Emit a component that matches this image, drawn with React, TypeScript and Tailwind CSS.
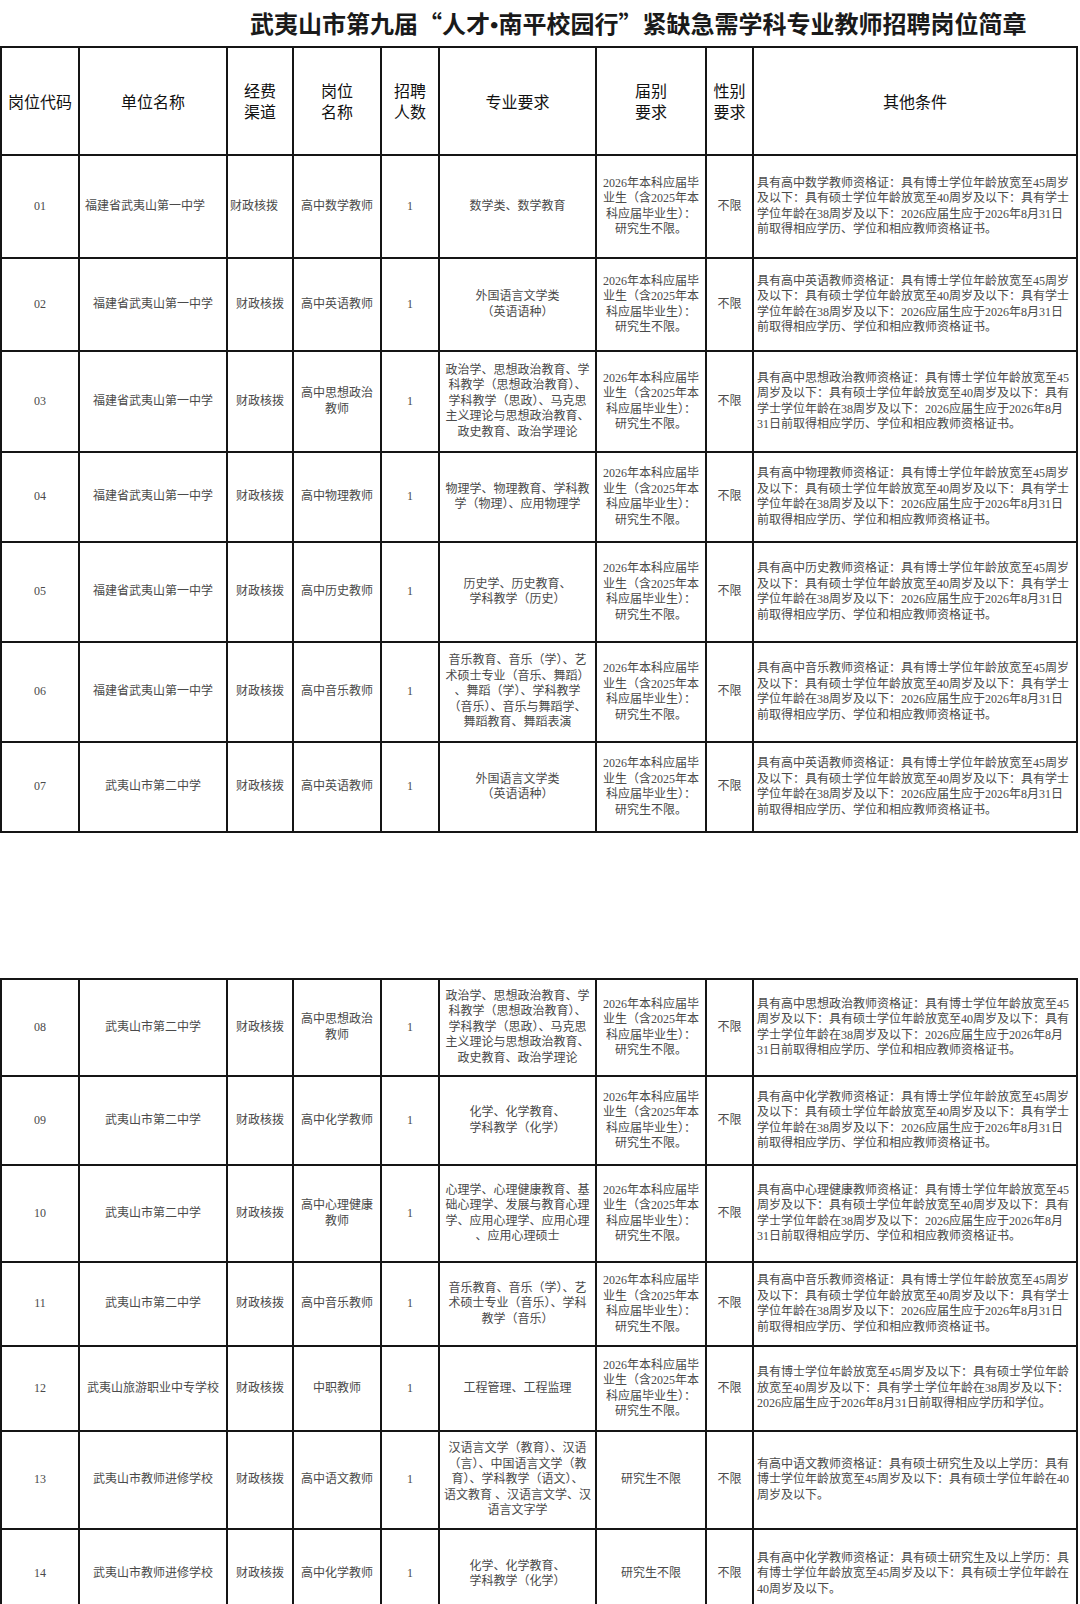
import React from "react";

type Row = {
  code: string;
  unit: string;
  left?: boolean;
  post: string[];
  major: string[];
  grad?: string[];
  cond: string[];
  h: string;
};

const GRAD = ["2026年本科应届毕", "业生（含2025年本", "科应届毕业生）：", "研究生不限。"];

const std = (s: string) => [
  `具有高中${s}教师资格证：具有博士学位年龄放宽至45周岁`,
  "及以下：具有硕士学位年龄放宽至40周岁及以下：具有学士",
  "学位年龄在38周岁及以下：2026应届生应于2026年8月31日",
  "前取得相应学历、学位和相应教师资格证书。",
];

const long = (s: string) => [
  `具有高中${s}教师资格证：具有博士学位年龄放宽至45`,
  "周岁及以下：具有硕士学位年龄放宽至40周岁及以下：具有",
  "学士学位年龄在38周岁及以下：2026应届生应于2026年8月",
  "31日前取得相应学历、学位和相应教师资格证书。",
];

const ZZ = [
  "政治学、思想政治教育、学",
  "科教学（思想政治教育）、",
  "学科教学（思政）、马克思",
  "主义理论与思想政治教育、",
  "政史教育、政治学理论",
];

const FIRST = "福建省武夷山第一中学";
const SECOND = "武夷山市第二中学";
const JX = "武夷山市教师进修学校";

const part1: Row[] = [
  { code: "01", unit: FIRST, left: true, post: ["高中数学教师"], major: ["数学类、数学教育"], cond: std("数学"), h: "h-[103px]" },
  { code: "02", unit: FIRST, post: ["高中英语教师"], major: ["外国语言文学类", "（英语语种）"], cond: std("英语"), h: "h-[93px]" },
  { code: "03", unit: FIRST, post: ["高中思想政治", "教师"], major: ZZ, cond: long("思想政治"), h: "h-[101px]" },
  { code: "04", unit: FIRST, post: ["高中物理教师"], major: ["物理学、物理教育、学科教", "学（物理）、应用物理学"], cond: std("物理"), h: "h-[90px]" },
  { code: "05", unit: FIRST, post: ["高中历史教师"], major: ["历史学、历史教育、", "学科教学（历史）"], cond: std("历史"), h: "h-[100px]" },
  {
    code: "06",
    unit: FIRST,
    post: ["高中音乐教师"],
    major: ["音乐教育、音乐（学）、艺", "术硕士专业（音乐、舞蹈）", "、舞蹈（学）、学科教学", "（音乐）、音乐与舞蹈学、", "舞蹈教育、舞蹈表演"],
    cond: std("音乐"),
    h: "h-[100px]",
  },
  { code: "07", unit: SECOND, post: ["高中英语教师"], major: ["外国语言文学类", "（英语语种）"], cond: std("英语"), h: "h-[90px]" },
];

const part2: Row[] = [
  { code: "08", unit: SECOND, post: ["高中思想政治", "教师"], major: ZZ, cond: long("思想政治"), h: "h-[97px]" },
  { code: "09", unit: SECOND, post: ["高中化学教师"], major: ["化学、化学教育、", "学科教学（化学）"], cond: std("化学"), h: "h-[89px]" },
  {
    code: "10",
    unit: SECOND,
    post: ["高中心理健康", "教师"],
    major: ["心理学、心理健康教育、基", "础心理学、发展与教育心理", "学、应用心理学、应用心理", "、应用心理硕士"],
    cond: long("心理健康"),
    h: "h-[97px]",
  },
  {
    code: "11",
    unit: SECOND,
    post: ["高中音乐教师"],
    major: ["音乐教育、音乐（学）、艺", "术硕士专业（音乐）、学科", "教学（音乐）"],
    cond: std("音乐"),
    h: "h-[84px]",
  },
  {
    code: "12",
    unit: "武夷山旅游职业中专学校",
    post: ["中职教师"],
    major: ["工程管理、工程监理"],
    cond: [
      "具有博士学位年龄放宽至45周岁及以下：具有硕士学位年龄",
      "放宽至40周岁及以下：具有学士学位年龄在38周岁及以下：",
      "2026应届生应于2026年8月31日前取得相应学历和学位。",
    ],
    h: "h-[85px]",
  },
  {
    code: "13",
    unit: JX,
    post: ["高中语文教师"],
    major: ["汉语言文学（教育）、汉语", "（言）、中国语言文学（教", "育）、学科教学（语文）、", "语文教育 、汉语言文学、汉", "语言文字学"],
    grad: ["研究生不限"],
    cond: [
      "有高中语文教师资格证：具有硕士研究生及以上学历：具有",
      "博士学位年龄放宽至45周岁及以下：具有硕士学位年龄在40",
      "周岁及以下。",
    ],
    h: "h-[98px]",
  },
  {
    code: "14",
    unit: JX,
    post: ["高中化学教师"],
    major: ["化学、化学教育、", "学科教学（化学）"],
    grad: ["研究生不限"],
    cond: [
      "具有高中化学教师资格证：具有硕士研究生及以上学历：具",
      "有博士学位年龄放宽至45周岁及以下：具有硕士学位年龄在",
      "40周岁及以下。",
    ],
    h: "h-[90px]",
  },
];

const td = "border-2 border-[#151515] align-middle";

function Lines({ lines }: { lines: string[] }) {
  return (
    <>
      {lines.map((l, i) => (
        <div key={i} className="whitespace-nowrap">
          {l}
        </div>
      ))}
    </>
  );
}

function Cols() {
  return (
    <colgroup>
      <col className="w-[78px]" />
      <col className="w-[148px]" />
      <col className="w-[66px]" />
      <col className="w-[88px]" />
      <col className="w-[58px]" />
      <col className="w-[157px]" />
      <col className="w-[110px]" />
      <col className="w-[47px]" />
      <col className="w-[324px]" />
    </colgroup>
  );
}

function Body({ rows }: { rows: Row[] }) {
  return (
    <tbody className="text-[12px] leading-[15.5px] text-[#4a4a4a] [font-family:'Liberation_Serif','Noto_Sans_CJK_SC',serif]">
      {rows.map((r) => (
        <tr key={r.code} className={r.h}>
          <td className={`${td} text-center`}>{r.code}</td>
          <td className={`${td} ${r.left ? "pl-[5px] text-left" : "text-center"}`}>{r.unit}</td>
          <td className={`${td} ${r.left ? "pl-[2px] text-left" : "text-center"}`}>财政核拨</td>
          <td className={`${td} text-center`}>
            <Lines lines={r.post} />
          </td>
          <td className={`${td} text-center`}>1</td>
          <td className={`${td} text-center`}>
            <Lines lines={r.major} />
          </td>
          <td className={`${td} text-center`}>
            <Lines lines={r.grad ?? GRAD} />
          </td>
          <td className={`${td} text-center`}>不限</td>
          <td className={`${td} pl-[3px] text-left`}>
            <Lines lines={r.cond} />
          </td>
        </tr>
      ))}
    </tbody>
  );
}

export default function App() {
  return (
    <div className="h-[1604px] w-[1080px] overflow-hidden bg-white">
      <h1 className="h-[46px] pl-[250px] pt-[9px] text-[24px] font-bold leading-[28px] whitespace-nowrap text-[#1a1a1a] [font-family:'Noto_Sans_CJK_SC',serif]">
        武夷山市第九届“人才
        <span className="[font-family:'Liberation_Serif',serif]">•</span>
        南平校园行”紧缺急需学科专业教师招聘岗位简章
      </h1>
      <table className="w-[1076px] table-fixed border-collapse">
        <Cols />
        <thead className="text-[16px] leading-[21px] font-normal text-[#111] [font-family:'Noto_Sans_CJK_SC',sans-serif]">
          <tr className="h-[108px]">
            <th className={`${td} font-normal`}>岗位代码</th>
            <th className={`${td} font-normal`}>单位名称</th>
            <th className={`${td} font-normal`}>
              <Lines lines={["经费", "渠道"]} />
            </th>
            <th className={`${td} font-normal`}>
              <Lines lines={["岗位", "名称"]} />
            </th>
            <th className={`${td} font-normal`}>
              <Lines lines={["招聘", "人数"]} />
            </th>
            <th className={`${td} font-normal`}>专业要求</th>
            <th className={`${td} font-normal`}>
              <Lines lines={["届别", "要求"]} />
            </th>
            <th className={`${td} font-normal`}>
              <Lines lines={["性别", "要求"]} />
            </th>
            <th className={`${td} font-normal`}>其他条件</th>
          </tr>
        </thead>
        <Body rows={part1} />
      </table>
      <div className="h-[145px]" />
      <table className="w-[1076px] table-fixed border-collapse">
        <Cols />
        <Body rows={part2} />
      </table>
    </div>
  );
}
